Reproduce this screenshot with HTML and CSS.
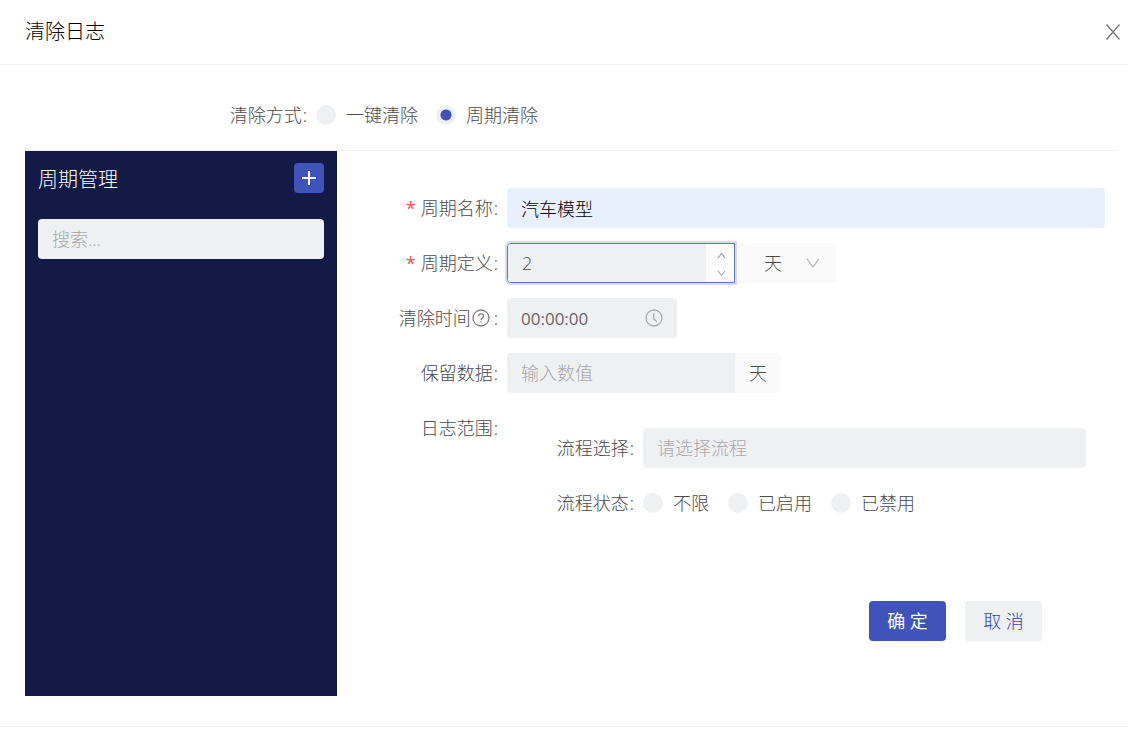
FILE: index.html
```html
<!DOCTYPE html>
<html lang="zh-CN">
<head>
<meta charset="utf-8">
<meta name="viewport" content="width=device-width, initial-scale=1">
<title>清除日志</title>
<link rel="stylesheet" href="styles.css">
</head>
<body>
<header class="header">
  <h1 class="title">清除日志</h1>
  <button class="close" type="button" aria-label="关闭">
    <svg class="icon" width="16" height="18" viewBox="0 0 16 18"><path d="M1.500 1.500 14.500 16.500M14.500 1.500 1.500 16.500"/></svg>
  </button>
</header>
<main class="content">
  <div class="row method" role="radiogroup" aria-labelledby="method-label">
    <span class="label" id="method-label">清除方式<span class="colon">:</span></span>
    <div class="radios">
      <label class="radio"><input type="radio" name="method">一键清除</label>
      <label class="radio"><input type="radio" name="method" checked>周期清除</label>
    </div>
  </div>
  <div class="panels">
    <aside class="sidebar">
      <div class="sidebar-head">
        <h2 class="sidebar-title">周期管理</h2>
        <button class="add" type="button" aria-label="新增">
          <svg class="icon add-icon" width="16" height="16" viewBox="0 0 16 16"><path d="M8 1v14M1 8h14"/></svg>
        </button>
      </div>
      <input class="field search" type="text" placeholder="搜索..." aria-label="搜索">
    </aside>
    <form class="form">
      <div class="row">
        <label class="label" for="name"><span class="required">*</span>周期名称<span class="colon">:</span></label>
        <input class="field filled" id="name" type="text" value="汽车模型">
      </div>
      <div class="row">
        <label class="label" for="period"><span class="required">*</span>周期定义<span class="colon">:</span></label>
        <div class="group">
          <div class="number focused">
            <input class="field number-input" id="period" type="number" value="2">
            <div class="steps">
              <button class="step step-up" type="button" aria-label="增加"><svg class="icon" width="9" height="7" viewBox="0 0 9 7"><path d="M1 6 4.500 1.500 8 6"/></svg></button>
              <button class="step" type="button" aria-label="减少"><svg class="icon" width="9" height="7" viewBox="0 0 9 7"><path d="M1 1 4.500 5.500 8 1"/></svg></button>
            </div>
          </div>
          <div class="unit-select">
            <select class="unit" aria-label="周期单位"><option>天</option></select>
            <svg class="icon arrow" width="14" height="10" viewBox="0 0 14 10"><path d="M1 .8 7 9 13 .8"/></svg>
          </div>
        </div>
      </div>
      <div class="row">
        <label class="label" for="time">清除时间<svg class="icon help" width="18" height="18" viewBox="0 0 18 18"><circle cx="9" cy="9" r="8"/><path d="M6.600 7.200C6.600 4 11.500 4 11.500 7.100 11.500 9 9 8.800 9 11M9 12.200v1.300"/></svg><span class="colon">:</span></label>
        <div class="time">
          <input class="field" id="time" type="text" value="00:00:00">
          <svg class="icon clock" width="18" height="18" viewBox="0 0 18 18"><circle cx="9" cy="9" r="8"/><path d="M8.800 4.200v5.800l3 2.500"/></svg>
        </div>
      </div>
      <div class="row">
        <label class="label" for="keep">保留数据<span class="colon">:</span></label>
        <div class="group">
          <input class="field keep" id="keep" type="text" placeholder="输入数值">
          <span class="addon">天</span>
        </div>
      </div>
      <div class="row">
        <span class="label">日志范围<span class="colon">:</span></span>
        <div class="scope">
          <div class="row scope-row">
            <label class="label" for="flow">流程选择<span class="colon">:</span></label>
            <select class="field flow" id="flow"><option value="">请选择流程</option></select>
          </div>
          <div class="row scope-row" role="radiogroup" aria-labelledby="state-label">
            <span class="label" id="state-label">流程状态<span class="colon">:</span></span>
            <div class="radios">
              <label class="radio"><input type="radio" name="state">不限</label>
              <label class="radio"><input type="radio" name="state">已启用</label>
              <label class="radio"><input type="radio" name="state">已禁用</label>
            </div>
          </div>
        </div>
      </div>
      <div class="actions">
        <button class="button primary" type="submit">确 定</button>
        <button class="button" type="button">取 消</button>
      </div>
    </form>
  </div>
</main>
<footer class="footer"></footer>
</body>
</html>
```
FILE: styles.css
```css
* {
  box-sizing: border-box;
}

body {
  margin: 0;
  background: #fff;
  color: #4a4a4a;
  font: 300 18px/26px "Open Sans", "Noto Sans CJK SC", sans-serif;
}

input,
select,
button {
  margin: 0;
  border: 0;
  color: inherit;
  font: inherit;
}

button {
  padding: 0;
  background: none;
  cursor: pointer;
}

.icon {
  flex: none;
  fill: none;
  stroke: currentColor;
  stroke-width: 1.3;
}

.header {
  display: flex;
  align-items: center;
  justify-content: space-between;
  height: 65px;
  padding: 0 7px 1px 25px;
  border-bottom: 1px solid #f0f0f0;
}

.title,
.sidebar-title {
  margin: 0;
  color: #000;
  font-size: 20px;
  font-weight: 300;
}

.close {
  display: flex;
  color: #777;
}

.content {
  padding: 30px 11px 30px 25px;
}

.row {
  display: grid;
  grid-template-columns: 157px minmax(0, 1fr);
}

.method {
  grid-template-columns: 291px minmax(0, 1fr);
  margin-bottom: 15px;
}

.label {
  display: flex;
  align-items: center;
  justify-content: flex-end;
  height: 40px;
}

.colon {
  margin: 0 9px 0 1px;
}

.required {
  margin-right: 5px;
  color: #ff4d4f;
  font-weight: 400;
}

.help {
  margin: 0 3px 0 1px;
  color: #808080;
}

.radios {
  display: flex;
  align-items: center;
  gap: 18px;
  height: 40px;
}

.scope .radios {
  gap: 19px;
}

.radio {
  display: flex;
  align-items: center;
  gap: 10px;
}

.radio input {
  width: 20px;
  height: 20px;
  border-radius: 50%;
  appearance: none;
  background: #eff0f2;
}

.radio input:checked {
  background: radial-gradient(circle, #3f51b8 5px, #eff0f2 6px);
}

.panels {
  display: flex;
  min-height: 546px;
  border-top: 1px solid #f0f0f0;
}

.sidebar {
  width: 312px;
  flex: none;
  padding: 12px 13px;
  background: #121a45;
}

.sidebar-head {
  display: flex;
  align-items: flex-start;
  justify-content: space-between;
  margin-bottom: 26px;
}

.sidebar-title {
  padding-top: 4px;
  color: #fff;
}

.add {
  display: grid;
  place-items: center;
  width: 30px;
  height: 30px;
  border-radius: 4px;
  background: #4053b8;
  color: #fff;
}

.add-icon {
  stroke-width: 2;
}

.field {
  width: 100%;
  height: 40px;
  padding: 0 14px;
  border-radius: 4px;
  background: #eff0f2;
  outline: 0;
}

.field::placeholder {
  color: #a8a8a8;
  opacity: 1;
}

.form {
  display: flex;
  flex: 1;
  flex-direction: column;
  gap: 15px;
  min-width: 0;
  padding: 37px 12px 0 13px;
}

.filled {
  background: #e8effd;
  color: #000;
}

.group {
  display: flex;
}

.number {
  display: flex;
  width: 228px;
  height: 40px;
  border: 1px solid #6073c8;
  border-radius: 4px 0 0 4px;
  background: #fff;
}

.focused {
  z-index: 1;
  box-shadow: 0 0 0 2px #d9dcf1;
}

.number-input {
  flex: 1;
  min-width: 0;
  height: 38px;
  border-radius: 3px 0 0 3px;
  appearance: textfield;
}

.number-input::-webkit-inner-spin-button {
  margin: 0;
  appearance: none;
}

.steps {
  display: grid;
  width: 28px;
}

.step {
  display: grid;
  place-items: center;
  padding-left: 3px;
  color: #909090;
}

.step .icon {
  stroke-width: 1;
}

.step-up {
  padding-top: 3px;
  color: #6677cc;
}

.unit-select {
  display: grid;
  width: 101px;
  align-items: center;
}

.unit {
  grid-area: 1 / 1;
  width: 100%;
  height: 40px;
  padding: 0 29px;
  border-radius: 0 4px 4px 0;
  appearance: none;
  background: #fafafa;
}

.arrow {
  z-index: 1;
  grid-area: 1 / 1;
  justify-self: end;
  margin-right: 16px;
  color: #bbb;
  pointer-events: none;
}

.time {
  display: grid;
  width: 170px;
  align-items: center;
}

.time .field {
  grid-area: 1 / 1;
  color: #666;
  font-size: 17px;
  font-weight: 400;
}

.clock {
  z-index: 1;
  grid-area: 1 / 1;
  justify-self: end;
  margin-right: 14px;
  color: #aaa;
  pointer-events: none;
}

.keep {
  width: 228px;
  border-radius: 4px 0 0 4px;
}

.addon {
  display: grid;
  place-items: center;
  width: 46px;
  border-radius: 0 4px 4px 0;
  background: #fafafa;
}

.scope {
  display: grid;
  gap: 15px;
  padding: 20px 19px 0 0;
}

.scope-row {
  grid-template-columns: 136px minmax(0, 1fr);
}

.flow {
  appearance: none;
  color: #a8a8a8;
}

.actions {
  display: flex;
  justify-content: flex-end;
  gap: 19px;
  margin-top: 63px;
  padding-right: 63px;
}

.button {
  width: 77px;
  height: 40px;
  border-radius: 4px;
  background: #eff0f2;
  box-shadow: 0 2px 0 #fafafa;
  color: #3044b0;
}

.primary {
  background: #4053b8;
  color: #fff;
  font-weight: 400;
}

.footer {
  height: 12px;
  border-top: 1px solid #f0f0f0;
}
```
